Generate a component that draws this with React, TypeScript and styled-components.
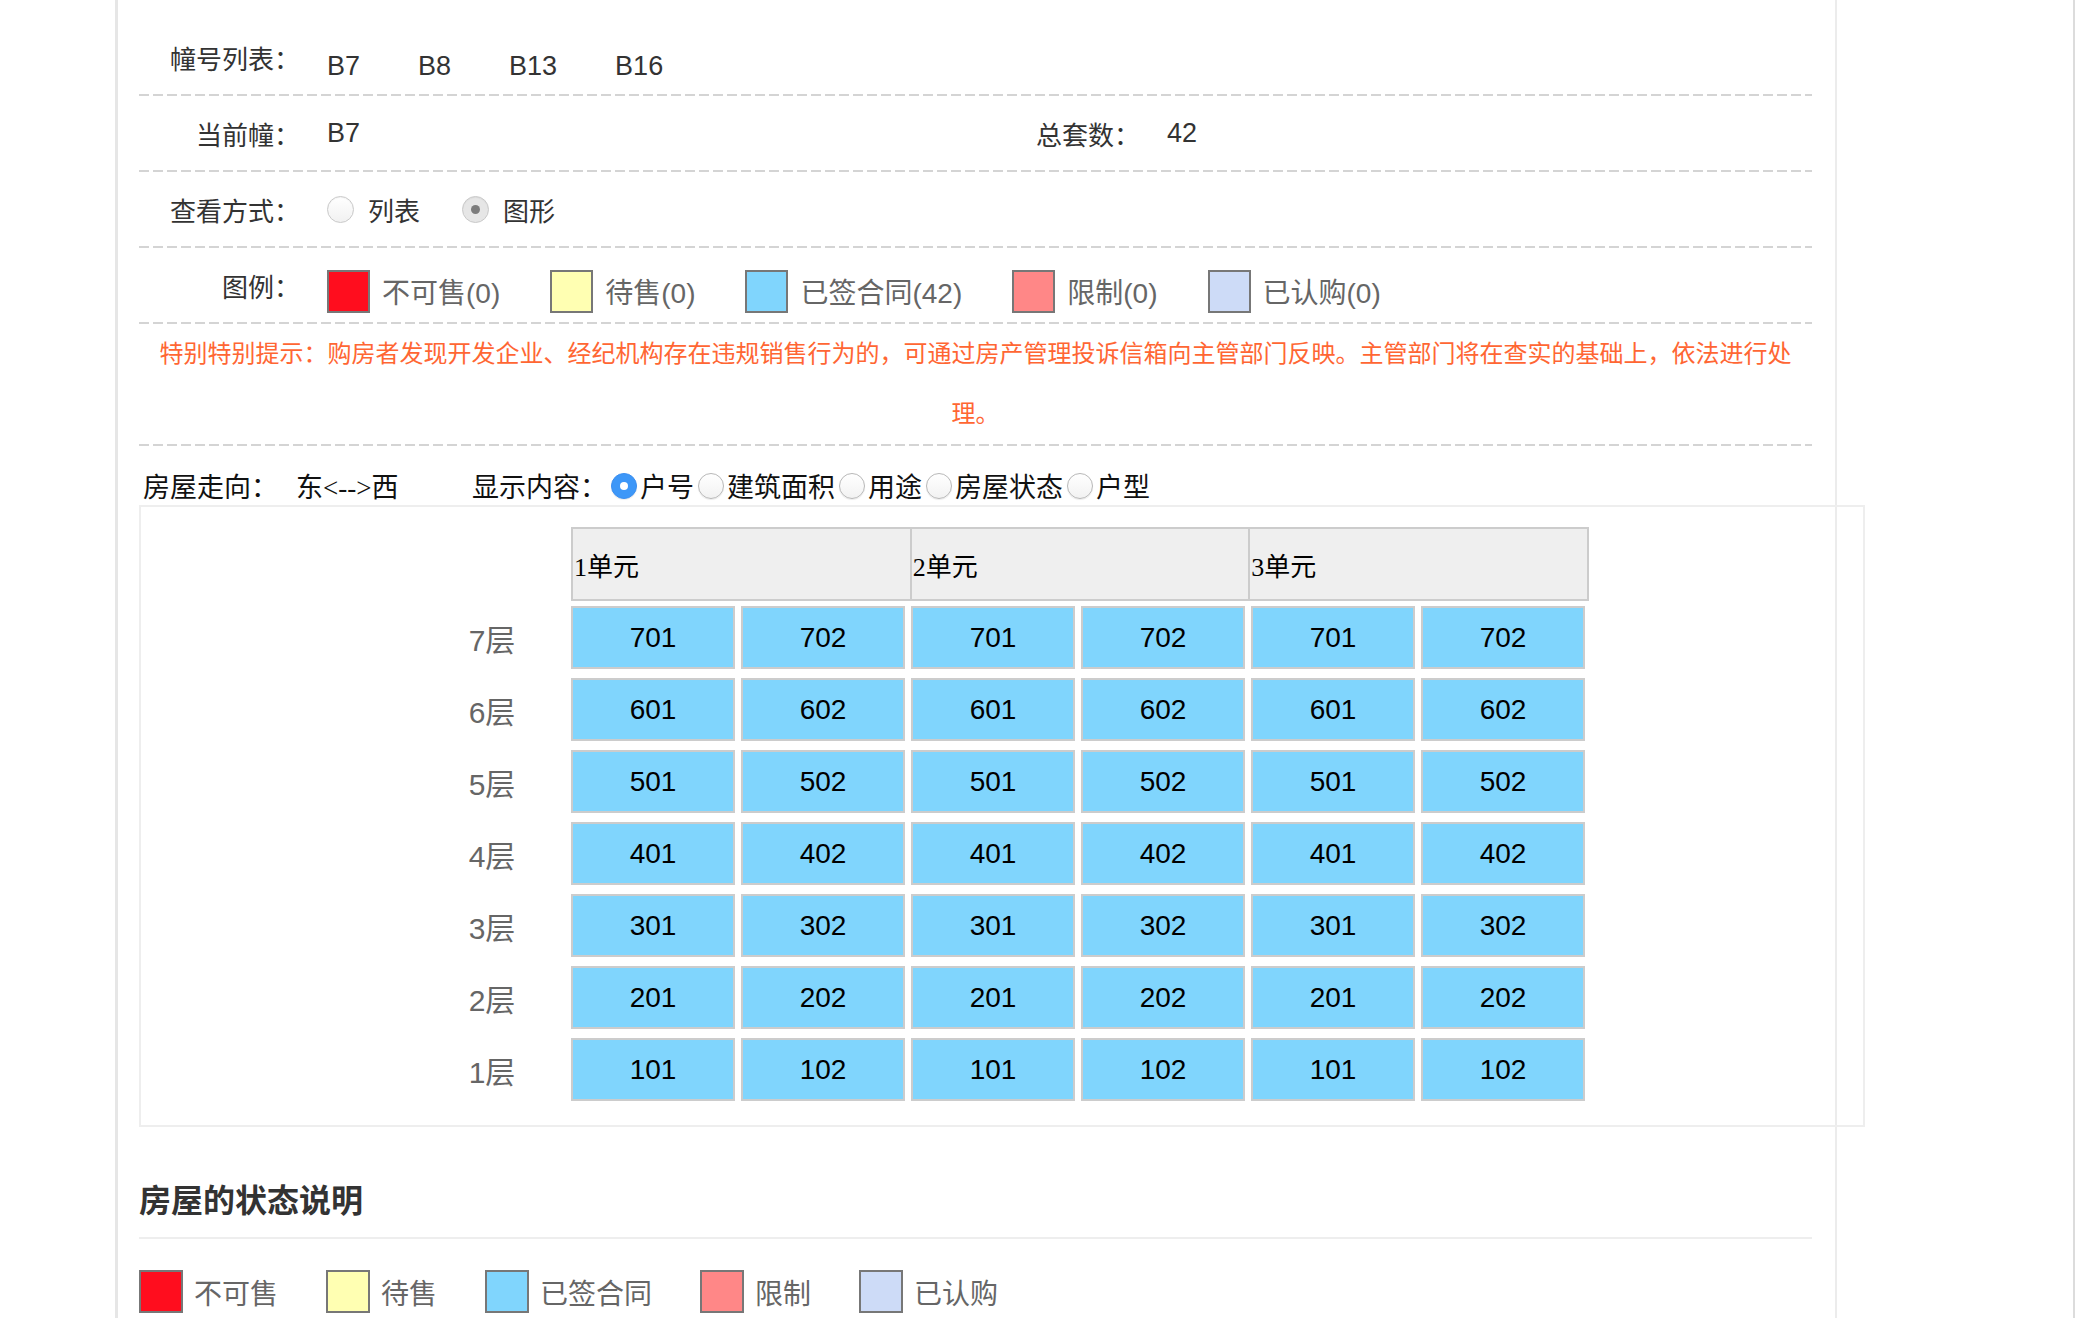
import React from "react";
import styled, { createGlobalStyle } from "styled-components";

const SANS = `"Liberation Sans", "Noto Sans CJK SC", sans-serif`;
const SERIF = `"Liberation Serif", "Noto Sans CJK SC", serif`;

const GlobalStyle = createGlobalStyle`
  html, body { margin: 0; padding: 0; background: #fff; }
  body { font-family: ${SANS}; color: #333; }
  * { box-sizing: border-box; }
`;

const dashed = `repeating-linear-gradient(to right, #d4d4d4 0 10px, transparent 10px 14px) left bottom / 100% 2px no-repeat`;

const Page = styled.div`
  width: 2075px;
  min-height: 1318px;
  border-right: 2px solid #dcdcdc;
  display: flex;
`;

const Main = styled.main`
  margin-left: 115px;
  width: 1722px;
  border-left: 3px solid #e6e6e6;
  border-right: 2px solid #ececec;
  padding: 20px 23px 0 21px;
`;

const InfoRow = styled.div<{ $split?: boolean }>`
  display: grid;
  grid-template-columns: ${(p) => (p.$split ? "161px 679px 161px 1fr" : "161px 1fr")};
  align-items: center;
  height: 76px;
  padding-bottom: 2px;
  background: ${dashed};
`;

const Label = styled.div`
  font-size: 26px;
  text-align: right;
  white-space: nowrap;
  color: #333;
`;

const Value = styled.div`
  display: flex;
  align-items: center;
  padding-left: 27px;
  font-size: 27px;
  color: #333;
`;

const BuildingLink = styled.a`
  padding-top: 18px;
  margin-right: 58px;
  color: #333;
  text-decoration: none;
  cursor: pointer;
`;

const RadioOption = styled.label`
  display: inline-flex;
  align-items: center;
  margin-right: 42px;
  font-size: 26px;
  color: #333;
`;

const MacRadio = styled.span<{ $checked?: boolean }>`
  position: relative;
  width: 27px;
  height: 27px;
  border-radius: 50%;
  border: 1px solid #c9c9c9;
  background: ${(p) => (p.$checked ? "#e6e6e6" : "linear-gradient(#ffffff, #f1f1f1)")};
  box-shadow: inset 0 1px 1px rgba(0, 0, 0, 0.05);
  margin-right: 14px;
  &::after {
    content: "";
    display: ${(p) => (p.$checked ? "block" : "none")};
    position: absolute;
    left: 50%;
    top: 50%;
    width: 9px;
    height: 9px;
    margin: -4.5px 0 0 -4.5px;
    border-radius: 50%;
    background: #7c7c7c;
  }
`;

const LegendList = styled.div`
  display: flex;
  align-items: center;
  padding-top: 12px;
`;

const LegendItem = styled.div<{ $gap: number; $after: number }>`
  display: flex;
  align-items: center;
  margin-right: ${(p) => p.$after}px;
  font-size: 28px;
  color: #666;
  span {
    margin-left: ${(p) => p.$gap}px;
    white-space: nowrap;
  }
`;

const Swatch = styled.i<{ $color: string; $w?: number; $h?: number }>`
  display: block;
  width: ${(p) => p.$w ?? 43}px;
  height: ${(p) => p.$h ?? 43}px;
  border: 2px solid #777;
  background: ${(p) => p.$color};
`;

const Notice = styled.p`
  margin: 0;
  font-size: 24px;
  line-height: 60px;
  color: #ff6633;
  text-align: center;
  padding-bottom: 2px;
  background: ${dashed};
`;

const DirectionRow = styled.div`
  display: flex;
  align-items: center;
  height: 40px;
  margin-top: 19px;
  padding-left: 4px;
  font-family: ${SERIF};
  font-size: 27px;
  color: #111;
`;

const DirValue = styled.span`
  margin-left: 18px;
  width: 176px;
`;

const BlueRadioOption = styled.label`
  display: inline-flex;
  align-items: center;
`;

const BlueRadio = styled.span<{ $checked?: boolean }>`
  position: relative;
  width: 26px;
  height: 26px;
  margin: 2px 3px 0 4px;
  border-radius: 50%;
  border: 1px solid ${(p) => (p.$checked ? "#3a8ef0" : "#b8b8b8")};
  background: ${(p) => (p.$checked ? "#3d97f8" : "linear-gradient(#ffffff, #f2f2f2)")};
  box-shadow: 0 1px 1px rgba(0, 0, 0, 0.08);
  &::after {
    content: "";
    display: ${(p) => (p.$checked ? "block" : "none")};
    position: absolute;
    left: 50%;
    top: 50%;
    width: 8px;
    height: 8px;
    margin: -4px 0 0 -4px;
    border-radius: 50%;
    background: #fff;
  }
`;

const Frame = styled.section`
  width: 1726px;
  border: 2px solid #eeeeee;
  display: flex;
  justify-content: center;
  padding: 20px 0 24px;
`;

const Table = styled.div`
  display: grid;
  grid-template-columns: 146px repeat(6, 164px);
  column-gap: 6px;
  row-gap: 9px;
`;

const HeaderBar = styled.div`
  grid-column: 2 / -1;
  display: flex;
  height: 74px;
  margin-right: -4px;
  margin-bottom: -4px;
  border: 2px solid #cccccc;
  background: #efefef;
`;

const UnitHead = styled.div`
  flex: 1;
  display: flex;
  align-items: center;
  padding-left: 1px;
  font-family: ${SERIF};
  font-size: 26px;
  color: #000;
  & + & {
    border-left: 2px solid #cccccc;
  }
`;

const FloorLabel = styled.div`
  display: flex;
  align-items: center;
  justify-content: center;
  font-size: 30px;
  color: #666;
`;

const Room = styled.div<{ $color: string }>`
  height: 63px;
  display: flex;
  align-items: center;
  justify-content: center;
  border: 2px solid #cccccc;
  background: ${(p) => p.$color};
  font-size: 28px;
  color: #000;
`;

const Title = styled.h3`
  margin: 52px 0 0;
  font-size: 32px;
  line-height: 44px;
  font-weight: bold;
  color: #333;
  padding-bottom: 14px;
  border-bottom: 2px solid #eeeeee;
`;

const StatusLegend = styled.div`
  display: flex;
  align-items: center;
  margin-top: 31px;
`;

const COLORS = {
  notForSale: "#ff0d1e",
  pending: "#ffffb2",
  signed: "#80d5fd",
  limited: "#ff8787",
  subscribed: "#cddbf7",
};

const topLegend = [
  { color: COLORS.notForSale, text: "不可售(0)" },
  { color: COLORS.pending, text: "待售(0)" },
  { color: COLORS.signed, text: "已签合同(42)" },
  { color: COLORS.limited, text: "限制(0)" },
  { color: COLORS.subscribed, text: "已认购(0)" },
];

const bottomLegend = [
  { color: COLORS.notForSale, text: "不可售" },
  { color: COLORS.pending, text: "待售" },
  { color: COLORS.signed, text: "已签合同" },
  { color: COLORS.limited, text: "限制" },
  { color: COLORS.subscribed, text: "已认购" },
];

const floors = [7, 6, 5, 4, 3, 2, 1];
const units = ["1单元", "2单元", "3单元"];
const displayOptions = ["户号", "建筑面积", "用途", "房屋状态", "户型"];

export default function App() {
  return (
    <>
      <GlobalStyle />
      <Page>
        <Main>
          <InfoRow>
            <Label>幢号列表：</Label>
            <Value>
              {["B7", "B8", "B13", "B16"].map((b) => (
                <BuildingLink key={b}>{b}</BuildingLink>
              ))}
            </Value>
          </InfoRow>
          <InfoRow $split>
            <Label>当前幢：</Label>
            <Value>B7</Value>
            <Label>总套数：</Label>
            <Value>42</Value>
          </InfoRow>
          <InfoRow>
            <Label>查看方式：</Label>
            <Value>
              <RadioOption>
                <MacRadio />
                列表
              </RadioOption>
              <RadioOption>
                <MacRadio $checked />
                图形
              </RadioOption>
            </Value>
          </InfoRow>
          <InfoRow>
            <Label>图例：</Label>
            <Value>
              <LegendList>
                {topLegend.map((l) => (
                  <LegendItem key={l.text} $gap={12} $after={50}>
                    <Swatch $color={l.color} />
                    <span>{l.text}</span>
                  </LegendItem>
                ))}
              </LegendList>
            </Value>
          </InfoRow>
          <Notice>
            特别特别提示：购房者发现开发企业、经纪机构存在违规销售行为的，可通过房产管理投诉信箱向主管部门反映。主管部门将在查实的基础上，依法进行处理。
          </Notice>
          <DirectionRow>
            <span>房屋走向：</span>
            <DirValue>东&lt;--&gt;西</DirValue>
            <span>显示内容：</span>
            {displayOptions.map((o, i) => (
              <BlueRadioOption key={o}>
                <BlueRadio $checked={i === 0} />
                {o}
              </BlueRadioOption>
            ))}
          </DirectionRow>
          <Frame>
            <Table>
              <div />
              <HeaderBar>
                {units.map((u) => (
                  <UnitHead key={u}>{u}</UnitHead>
                ))}
              </HeaderBar>
              {floors.map((f) => (
                <React.Fragment key={f}>
                  <FloorLabel>{f}层</FloorLabel>
                  {[0, 1, 2].flatMap((u) =>
                    [1, 2].map((n) => (
                      <Room key={`${u}-${n}`} $color={COLORS.signed}>
                        {`${f}0${n}`}
                      </Room>
                    ))
                  )}
                </React.Fragment>
              ))}
            </Table>
          </Frame>
          <Title>房屋的状态说明</Title>
          <StatusLegend>
            {bottomLegend.map((l) => (
              <LegendItem key={l.text} $gap={11} $after={48}>
                <Swatch $color={l.color} $w={44} $h={43} />
                <span>{l.text}</span>
              </LegendItem>
            ))}
          </StatusLegend>
        </Main>
      </Page>
    </>
  );
}
